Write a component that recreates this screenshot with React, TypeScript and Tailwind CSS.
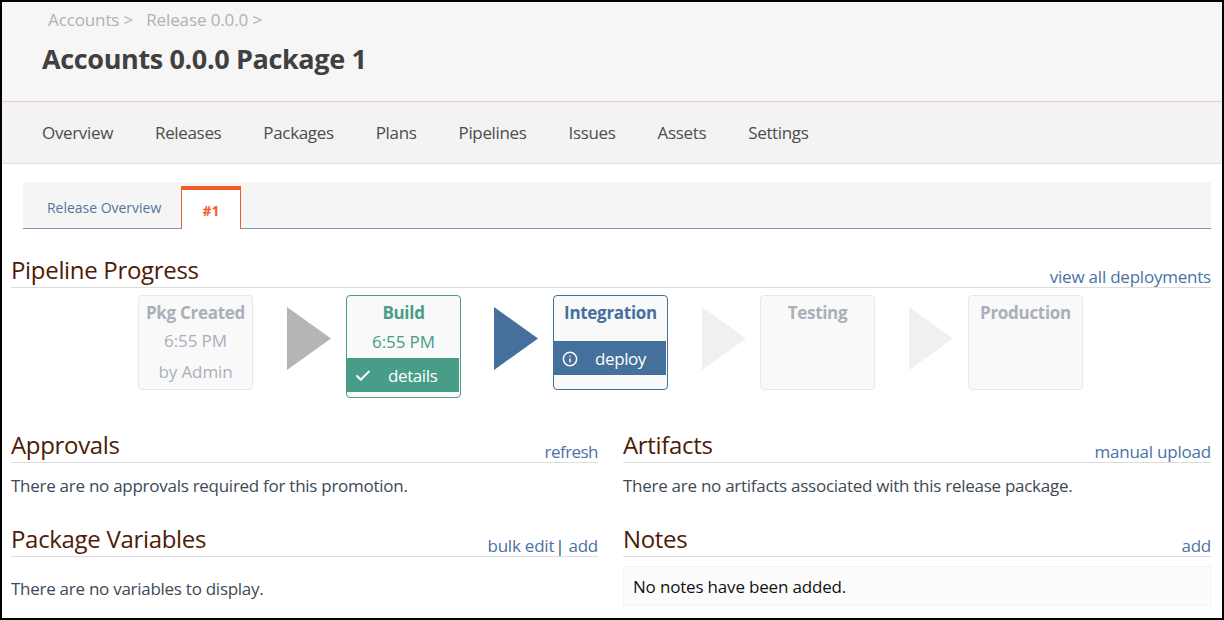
import React from 'react';
import { Check, Info } from 'lucide-react';

const navItems = ['Overview', 'Releases', 'Packages', 'Plans', 'Pipelines', 'Issues', 'Assets', 'Settings'];

const Arrow: React.FC<{ color: string; className: string }> = ({ color, className }) => (
    <div className={`pt-[12px] shrink-0 ${className}`}>
        <svg width="44" height="63" viewBox="0 0 44 63" className="block">
            <polygon points="0,0 44,31.5 0,63" fill={color} />
        </svg>
    </div>
);

const SectionHead: React.FC<{ title: string; children?: React.ReactNode }> = ({ title, children }) => (
    <div className="flex items-end justify-between h-[34px] border-b border-[#dddddd]">
        <h2 className="text-[24px] leading-[32px] pb-px tracking-[-0.32px] text-[#4d1c05]">{title}</h2>
        <div className="text-[17px] leading-[20px] tracking-[-0.22px] text-[#4a72a5]">{children}</div>
    </div>
);

export default function App() {
    return (
        <div className="w-[1224px] h-[620px] overflow-hidden border-2 border-black bg-white font-['Open_Sans',sans-serif]">
            {/* Header */}
            <div className="h-[100px] bg-[#f6f6f6] border-b border-[#f5c9bb] pl-[40px]">
                <div className="flex gap-[13px] pl-[6px] pt-[6px] h-[24px] text-[17px] leading-[24px] tracking-[-0.12px] text-[#b1b1b1]">
                    <span>Accounts &gt;</span>
                    <span>Release 0.0.0 &gt;</span>
                </div>
                <h1 className="mt-[15px] text-[27px] leading-[36px] font-bold tracking-[-0.37px] text-[#404040]">Accounts 0.0.0 Package 1</h1>
            </div>

            {/* Nav */}
            <div className="h-[62px] bg-[#f3f3f3] border-b border-[#dedede] pl-[40px] flex items-center gap-[42px] text-[17px] tracking-[-0.34px] text-[#4d4d4d]">
                {navItems.map(item => (
                    <span key={item}>{item}</span>
                ))}
            </div>

            {/* Tabs */}
            <div className="mt-[18px] ml-[21px] w-[1188px] h-[47px] bg-[#f5f5f5] border-b border-[#7d97b3] flex items-end">
                <div className="w-[158px] h-[46px] flex items-center pl-[24px] pt-[4px] text-[14px] tracking-[-0.02px] text-[#56759a]">Release Overview</div>
                <div className="w-[60px] h-[43px] -mb-px bg-white border-x border-[#f15d2a] border-t-[4px] flex items-center justify-center pt-[1px] text-[14px] font-bold text-[#f15d2a]">#1</div>
            </div>

            <div className="px-[9px]">
                {/* Pipeline */}
                <div className="w-[1200px] mt-[25px]">
                    <SectionHead title="Pipeline Progress">view all deployments</SectionHead>
                </div>
                <div className="flex justify-center w-[1199px] mt-[7px] text-[17px] tracking-[-0.1px]">
                    <div className="w-[115px] h-[95px] shrink-0 bg-[#f9f9f9] border border-[#e8e8e8] rounded text-center text-[#a8b0ba]">
                        <div className="h-[30px] pt-[2px] leading-[30px] font-bold tracking-[-0.3px]">Pkg Created</div>
                        <div className="h-[30px] leading-[30px]">6:55 PM</div>
                        <div className="h-[30px] pt-[1px] leading-[30px]">by Admin</div>
                    </div>
                    <Arrow color="#b5b5b5" className="w-[93px] pl-[34px]" />
                    <div className="w-[115px] h-[103px] shrink-0 bg-[#f9f9f9] border border-[#489d89] rounded text-center text-[#489d89]">
                        <div className="h-[30px] pt-[2px] leading-[30px] font-bold tracking-[-0.3px]">Build</div>
                        <div className="h-[32px] leading-[32px]">6:55 PM</div>
                        <div className="w-[112px] h-[34px] pt-[1px] bg-[#489d89] text-white flex items-center pl-[7px] tracking-[-0.4px]">
                            <Check size={18} strokeWidth={2.5} />
                            <span className="ml-[16px]">details</span>
                        </div>
                    </div>
                    <Arrow color="#46709c" className="w-[92px] pl-[33px]" />
                    <div className="w-[115px] h-[95px] shrink-0 bg-[#f9f9f9] border border-[#46709c] rounded text-center text-[#46709c]">
                        <div className="h-[30px] pt-[2px] leading-[30px] font-bold tracking-[-0.3px]">Integration</div>
                        <div className="h-[15px]" />
                        <div className="w-[112px] h-[34px] pt-[1px] bg-[#46709c] text-white flex items-center pl-[8px] tracking-[-0.4px]">
                            <Info size={16} strokeWidth={2.25} />
                            <span className="ml-[17px]">deploy</span>
                        </div>
                    </div>
                    <Arrow color="#f0f0f0" className="w-[92px] pl-[34px]" />
                    <div className="w-[115px] h-[95px] shrink-0 bg-[#f9f9f9] border border-[#e8e8e8] rounded text-center text-[#a8b0ba]">
                        <div className="h-[30px] pt-[2px] leading-[30px] font-bold tracking-[-0.3px]">Testing</div>
                    </div>
                    <Arrow color="#f0f0f0" className="w-[93px] pl-[34px]" />
                    <div className="w-[115px] h-[95px] shrink-0 bg-[#f9f9f9] border border-[#e8e8e8] rounded text-center text-[#a8b0ba]">
                        <div className="h-[30px] pt-[2px] leading-[30px] font-bold tracking-[-0.3px]">Production</div>
                    </div>
                </div>

                {/* Lower sections */}
                <div className="grid grid-cols-[587px_588px] gap-x-[25px] w-[1200px] mt-[31px] text-[17px] tracking-[-0.27px] text-[#3d4a55]">
                    <div>
                        <SectionHead title="Approvals"><span className="tracking-[-0.55px]">refresh</span></SectionHead>
                        <p className="h-[60px] pt-[11px] leading-[24px]">There are no approvals required for this promotion.</p>
                        <SectionHead title="Package Variables">
                            <span>bulk edit</span>
                            <span className="text-[#2f4f73] ml-px mr-[4px]">|</span>
                            <span>add</span>
                        </SectionHead>
                        <p className="pt-[20px] leading-[24px]">There are no variables to display.</p>
                    </div>
                    <div>
                        <SectionHead title="Artifacts">manual upload</SectionHead>
                        <p className="h-[60px] pt-[11px] leading-[24px]">There are no artifacts associated with this release package.</p>
                        <SectionHead title="Notes">add</SectionHead>
                        <div className="mt-[9px] h-[40px] bg-[#fcfcfc] border border-[#f3f3f3] pl-[9px] leading-[40px] tracking-[-0.18px] text-[#111111]">No notes have been added.</div>
                    </div>
                </div>
            </div>
        </div>
    );
}
